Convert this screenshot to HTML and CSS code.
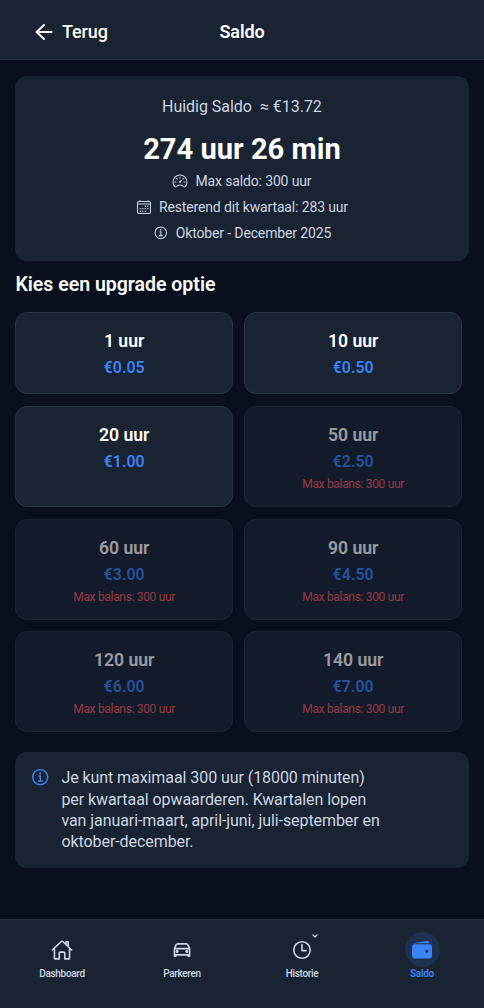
FILE: index.html
```html
<!DOCTYPE html>
<html lang="nl">
<head>
<meta charset="utf-8">
<meta name="viewport" content="width=device-width, initial-scale=1">
<title>Saldo</title>
<link rel="stylesheet" href="styles.css">
</head>
<body>
<div class="app">
  <header class="header">
    <a class="back">
      <svg class="back-icon" viewBox="0 0 20 20"><path d="M10 3 2.5 10 10 17M3 10H17.5"/></svg>
      <span>Terug</span>
    </a>
    <h1 class="header-title">Saldo</h1>
  </header>

  <main class="content">
    <section class="balance">
      <p class="balance-label"><span>Huidig Saldo</span><span>≈ €13.72</span></p>
      <p class="balance-value">274 uur 26 min</p>
      <p class="detail">
        <svg class="detail-icon" viewBox="0 0 512 512"><path d="M326.1 231.9l-47.5 75.5a31 31 0 01-7 7 30.11 30.11 0 01-35-49l75.5-47.5a10.23 10.23 0 0111.7 0 10.06 10.06 0 012.3 14z" fill="currentColor" stroke="none"/><path d="M256 64C132.3 64 32 164.2 32 287.9a223.18 223.18 0 0056.3 148.5c1.1 1.2 2.1 2.4 3.2 3.5a25.19 25.19 0 0037.1-.1 173.13 173.13 0 01254.8 0 25.19 25.19 0 0037.1.1l3.2-3.5A223.18 223.18 0 00480 287.9C480 164.2 379.7 64 256 64zM256 128v32M416 288h-32M128 288H96M165.49 197.49l-22.63-22.63M346.51 197.49l22.63-22.63"/></svg>
        <span>Max saldo: 300 uur</span>
      </p>
      <p class="detail">
        <svg class="detail-icon" viewBox="0 0 512 512"><rect x="48" y="80" width="416" height="384" rx="48"/><path d="M128 48v32M384 48v32M464 160H48"/><g fill="currentColor" stroke="none"><circle cx="296" cy="232" r="24"/><circle cx="376" cy="232" r="24"/><circle cx="296" cy="312" r="24"/><circle cx="376" cy="312" r="24"/><circle cx="136" cy="312" r="24"/><circle cx="216" cy="312" r="24"/><circle cx="136" cy="392" r="24"/><circle cx="216" cy="392" r="24"/><circle cx="296" cy="392" r="24"/></g></svg>
        <span>Resterend dit kwartaal: 283 uur</span>
      </p>
      <p class="detail">
        <svg class="detail-icon" viewBox="0 0 512 512"><path d="M248 64C146.39 64 64 146.39 64 248s82.39 184 184 184 184-82.39 184-184S349.61 64 248 64zM220 220h32v116M208 340h88"/><path d="M248 130a26 26 0 1026 26 26 26 0 00-26-26z" fill="currentColor" stroke="none"/></svg>
        <span>Oktober - December 2025</span>
      </p>
    </section>

    <h2 class="section-title">Kies een upgrade optie</h2>
    <div class="options">
      <div class="option"><b class="hours">1 uur</b><span class="price">€0.05</span></div>
      <div class="option"><b class="hours">10 uur</b><span class="price">€0.50</span></div>
      <div class="option"><b class="hours">20 uur</b><span class="price">€1.00</span></div>
      <div class="option disabled"><b class="hours">50 uur</b><span class="price">€2.50</span><span class="limit">Max balans: 300 uur</span></div>
      <div class="option disabled"><b class="hours">60 uur</b><span class="price">€3.00</span><span class="limit">Max balans: 300 uur</span></div>
      <div class="option disabled"><b class="hours">90 uur</b><span class="price">€4.50</span><span class="limit">Max balans: 300 uur</span></div>
      <div class="option disabled"><b class="hours">120 uur</b><span class="price">€6.00</span><span class="limit">Max balans: 300 uur</span></div>
      <div class="option disabled"><b class="hours">140 uur</b><span class="price">€7.00</span><span class="limit">Max balans: 300 uur</span></div>
    </div>

    <section class="info">
      <svg class="info-icon" viewBox="0 0 512 512"><path d="M248 64C146.39 64 64 146.39 64 248s82.39 184 184 184 184-82.39 184-184S349.61 64 248 64zM220 220h32v116M208 340h88"/><path d="M248 130a26 26 0 1026 26 26 26 0 00-26-26z" fill="currentColor" stroke="none"/></svg>
      <p class="info-text">Je kunt maximaal 300 uur (18000 minuten)<br>per kwartaal opwaarderen. Kwartalen lopen<br>van januari-maart, april-juni, juli-september en<br>oktober-december.</p>
    </section>
  </main>

  <nav class="nav">
    <a class="nav-item">
      <span class="nav-circle"><svg class="nav-icon" viewBox="0 0 512 512"><path d="M80 212v236a16 16 0 0016 16h96V328a24 24 0 0124-24h80a24 24 0 0124 24v136h96a16 16 0 0016-16V212M480 256L266.89 52c-5-5.28-16.69-5.34-21.78 0L32 256M400 179V64h-48v69"/></svg></span>
      <span>Dashboard</span>
    </a>
    <a class="nav-item">
      <span class="nav-circle"><svg class="nav-icon" viewBox="0 0 512 512"><path d="M80 224l37.78-88.15C123.93 121.5 139.6 112 157.11 112h197.78c17.51 0 33.18 9.5 39.33 23.85L432 224M80 224h352v144H80zM112 368v32H80v-32M432 368v32h-32v-32"/><circle cx="144" cy="288" r="16" fill="currentColor"/><circle cx="368" cy="288" r="16" fill="currentColor"/></svg></span>
      <span>Parkeren</span>
    </a>
    <a class="nav-item">
      <span class="nav-circle"><svg class="nav-icon" viewBox="0 0 512 512"><path d="M256 64C150 64 64 150 64 256s86 192 192 192 192-86 192-192S362 64 256 64zM256 128v144h96"/></svg><svg class="chevron" viewBox="0 0 8 6"><path d="m2 2 2 2 2-2"/></svg></span>
      <span>Historie</span>
    </a>
    <a class="nav-item active">
      <span class="nav-circle"><svg class="wallet" viewBox="0 0 20 18"><path d="M.5 4.3C1 2.7 2.1 2 3.7 1.7L14.3.1c1.6-.2 2.8.7 3.1 2.1H4C2.5 2.2 1.3 3 .5 4.3z"/><path fill-rule="evenodd" d="M3 3.2H17a3 3 0 0 1 3 3V14.500a3 3 0 0 1-3 3H3a3 3 0 0 1-3-3V6.200a3 3 0 0 1 3-3zM14.800 9a1.450 1.450 0 1 0 0 2.900a1.450 1.450 0 1 0 0-2.900z"/></svg></span>
      <span>Saldo</span>
    </a>
  </nav>
</div>
</body>
</html>
```
FILE: styles.css
```css
* { box-sizing: border-box; }
body { margin: 0; background: #0a0f1e; color: #fff; font-family: Roboto, sans-serif; }
h1, h2, p { margin: 0; }
svg { display: block; fill: none; stroke: currentColor; stroke-linecap: round; stroke-linejoin: round; flex: none; }
.app { height: 1008px; display: flex; flex-direction: column; }

.header { height: 60px; flex: none; display: grid; grid-template-columns: 1fr auto 1fr; align-items: center; padding: 5px 34px 0; background: #1a2332; border-bottom: 1px solid #2a3442; }
.back { display: flex; align-items: center; gap: 8px; font-size: 18px; font-weight: 500; line-height: 24px; letter-spacing: -.1px; }
.back-icon { width: 20px; height: 20px; stroke-width: 2; }
.header-title { font-size: 18px; font-weight: 600; line-height: 24px; letter-spacing: -.1px; }

.content { flex: 1; padding: 16px 15.5px 0 15.4px; }
.balance { height: 185px; padding: 20px 0 0; border-radius: 12px; background: #1a2332; text-align: center; color: #cbd5e1; }
.balance-label { display: flex; justify-content: center; gap: 8px; font-size: 16px; line-height: 22px; letter-spacing: -.03px; }
.balance-value { padding-top: 12px; color: #fff; font-size: 29.1px; font-weight: 700; line-height: 38px; }
.detail { display: flex; justify-content: center; align-items: center; gap: 7px; height: 26px; font-size: 14px; letter-spacing: -.14px; }
.detail-icon { width: 16px; height: 16px; stroke-width: 34; }

.section-title { padding-top: 11px; font-size: 19.5px; font-weight: 600; line-height: 25px; }
.options { display: grid; grid-template-columns: 217.5px 217.5px; grid-template-rows: 82px 101px 101px 101px; gap: 11.8px 11.5px; padding-top: 15px; }
.option { display: flex; flex-direction: column; align-items: center; padding-top: 16px; border: 1px solid #2a3442; border-radius: 12px; background: #1a2332; }
.hours { font-size: 17.6px; font-weight: 600; line-height: 24px; }
.price { padding-top: 4px; color: #3b82f6; font-size: 15.8px; font-weight: 600; line-height: 21px; }
.limit { padding-top: 4px; color: #f05a60; font-size: 12px; line-height: 16px; letter-spacing: -.32px; }
.disabled { opacity: .58; }

.info { display: flex; gap: 10px; height: 116px; margin-top: 19.6px; padding: 15.4px 15px; border-radius: 12px; background: #1a2332; }
.info-icon { width: 21px; height: 21px; color: #3b82f6; stroke-width: 36; }
.info-text { color: #cbd5e1; font-size: 16px; line-height: 21.2px; letter-spacing: -.07px; }

.nav { height: 89px; flex: none; display: grid; grid-template-columns: repeat(4, 120px); justify-content: center; border-top: 1px solid #2a3442; background: #1a2332; color: #cbd5e1; }
.nav-item { display: flex; flex-direction: column; align-items: center; padding-top: 12px; font-size: 10px; font-weight: 500; line-height: 14px; letter-spacing: -.3px; }
.nav-circle { position: relative; display: flex; align-items: center; justify-content: center; width: 35px; height: 35px; border-radius: 50%; }
.nav-icon { width: 22px; height: 22px; stroke-width: 38; }
.wallet { width: 20px; height: 18px; fill: currentColor; stroke: none; }
.chevron { position: absolute; top: 1px; right: 1px; width: 8px; height: 6px; stroke-width: 1.2; }
.active { color: #3b82f6; font-weight: 600; }
.active .nav-circle { background: #1e3150; }
```
